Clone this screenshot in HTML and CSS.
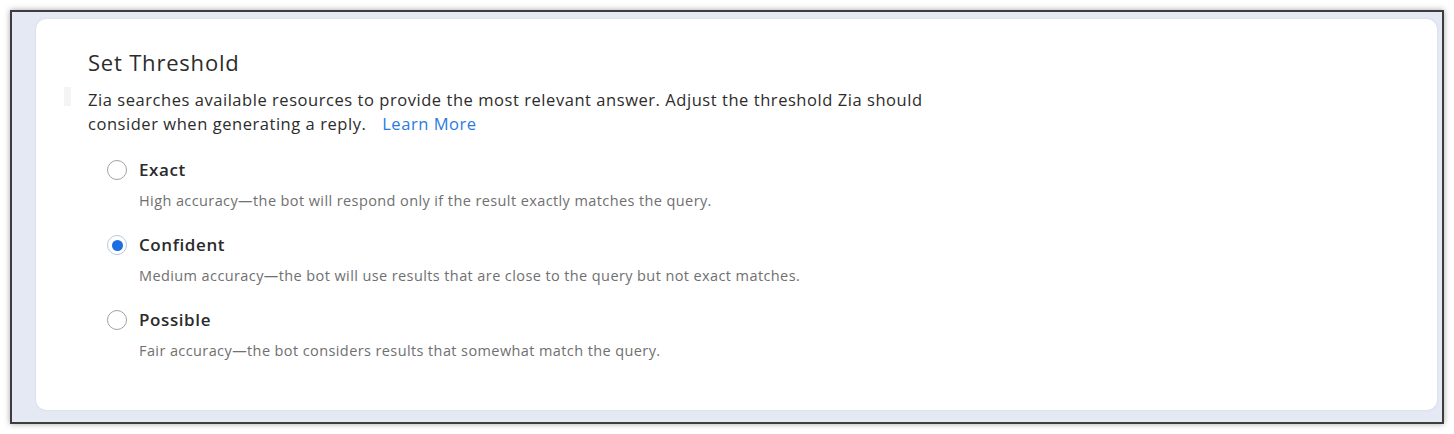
FILE: index.html
```html
<!DOCTYPE html>
<html lang="en">
<head>
<meta charset="utf-8">
<title>Set Threshold</title>
<link rel="stylesheet" href="styles.css">
</head>
<body>
<div class="frame">
  <div class="card">
    <span class="stray"></span>
    <h2 class="title">Set Threshold</h2>
    <p class="intro">Zia searches available resources to provide the most relevant answer. Adjust the threshold Zia should<br>consider when generating a reply. <a class="learn" href="#">Learn More</a></p>
    <div class="options">
      <div class="option">
        <div class="row"><span class="radio"></span><span class="label">Exact</span></div>
        <div class="desc">High accuracy—the bot will respond only if the result exactly matches the query.</div>
      </div>
      <div class="option">
        <div class="row"><span class="radio checked"></span><span class="label">Confident</span></div>
        <div class="desc">Medium accuracy—the bot will use results that are close to the query but not exact matches.</div>
      </div>
      <div class="option">
        <div class="row"><span class="radio"></span><span class="label">Possible</span></div>
        <div class="desc">Fair accuracy—the bot considers results that somewhat match the query.</div>
      </div>
    </div>
  </div>
</div>
</body>
</html>
```
FILE: styles.css
```css
* { box-sizing: border-box; }
html, body { margin: 0; background: #ffffff; }
body { font-family: "Open Sans", "Liberation Sans", sans-serif; color: #2b2b2b; }
.frame {
  margin: 10px;
  width: 1434px;
  height: 414px;
  border: 2px solid #3d3d3d;
  box-shadow: 0 0 6px rgba(0,0,0,0.35);
  background: #e5e9f3;
  padding: 7px 5px 12px 24px;
}
.card {
  position: relative;
  height: 100%;
  background: #ffffff;
  border-radius: 10px;
  box-shadow: 0 0 2px rgba(180,188,205,0.6);
  padding: 29px 0 0 52px;
}
.stray {
  position: absolute;
  left: 28px;
  top: 68px;
  width: 7px;
  height: 19px;
  background: #f4f4f6;
}
.title {
  margin: 0;
  font-size: 22px;
  line-height: 28px;
  font-weight: 500;
  letter-spacing: 0.8px;
  color: #2c2c2c;
}
.intro {
  margin: 12px 0 0 0;
  font-size: 16.5px;
  line-height: 24px;
  letter-spacing: 0.55px;
  color: #2c2c2c;
}
.learn { color: #2a7ae2; text-decoration: none; margin-left: 11px; }
.options { margin: 22px 0 0 19px; display: flex; flex-direction: column; gap: 23px; }
.option { display: flex; flex-direction: column; gap: 10px; }
.row { display: flex; align-items: center; gap: 12px; }
.radio {
  flex: none;
  width: 20px; height: 20px; border-radius: 50%;
  border: 1.5px solid #a2a2a2; background: #fff;
  display: inline-flex; align-items: center; justify-content: center;
}
.radio.checked { border-color: #b9c7e2; }
.radio.checked::after { content: ""; width: 11px; height: 11px; border-radius: 50%; background: #1b6fe0; }
.label { font-size: 17px; line-height: 24px; font-weight: 600; letter-spacing: 0.6px; color: #2b2b2b; }
.desc { padding-left: 32px; font-size: 14.5px; line-height: 18px; letter-spacing: 0.4px; color: #707070; }
```
